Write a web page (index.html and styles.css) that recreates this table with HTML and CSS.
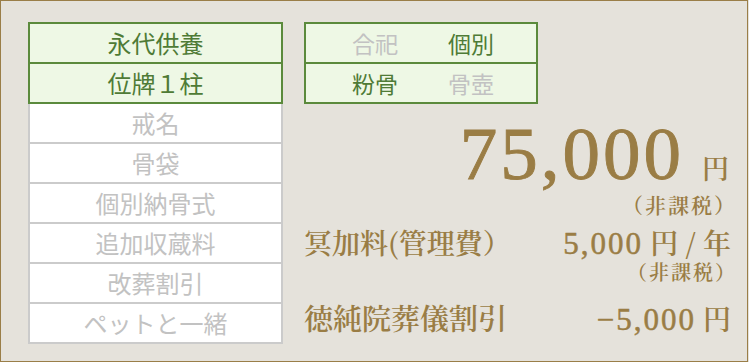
FILE: index.html
```html
<!DOCTYPE html>
<html lang="ja">
<head>
<meta charset="utf-8">
<title>プラン</title>
<link rel="stylesheet" href="styles.css">
</head>
<body>
<div class="frame">
  <div class="plans">
    <div class="group group-on">
      <div class="row">永代供養</div>
      <div class="row">位牌１柱</div>
    </div>
    <div class="group group-off">
      <div class="row">戒名</div>
      <div class="row">骨袋</div>
      <div class="row">個別納骨式</div>
      <div class="row">追加収蔵料</div>
      <div class="row">改葬割引</div>
      <div class="row">ペットと一緒</div>
    </div>
  </div>
  <div class="side">
    <div class="options">
      <div class="opt-row"><span class="opt off">合祀</span><span class="opt on">個別</span></div>
      <div class="opt-row"><span class="opt on">粉骨</span><span class="opt off">骨壺</span></div>
    </div>
    <div class="price">
      <span class="price-num">75,000</span><span class="price-yen">円</span>
    </div>
    <div class="tax tax-main">（非課税）</div>
    <div class="line line-fee">
      <span class="label">冥加料(管理費）</span>
      <span class="value"><span class="num">5,000</span> 円 / 年</span>
    </div>
    <div class="tax tax-fee">（非課税）</div>
    <div class="line line-disc">
      <span class="label">徳純院葬儀割引</span>
      <span class="value"><span class="num">−5,000</span> 円</span>
    </div>
  </div>
</div>
</body>
</html>
```
FILE: styles.css
```css
html, body {
  margin: 0;
  padding: 0;
  background: #e5e2db;
}
.frame {
  box-sizing: border-box;
  width: 748px;
  height: 362px;
  border: 1px solid #9a7e48;
  background: #e5e2db;
  display: flex;
  padding: 21px 20px 0 27px;
}
.plans {
  width: 255px;
  display: flex;
  flex-direction: column;
  font-family: "Noto Sans CJK JP", "Noto Sans", sans-serif;
  font-size: 24px;
}
.group {
  display: flex;
  flex-direction: column;
}
.row {
  height: 38px;
  display: flex;
  align-items: center;
  justify-content: center;
  line-height: 1;
}
.group-on {
  border: 2px solid #5b8a3c;
  background: #eef8e5;
  color: #4f7b36;
}
.group-on .row + .row {
  border-top: 2px solid #5b8a3c;
}
.group-off {
  border: 2px solid #cbcbcb;
  border-top: 0;
  background: #ffffff;
  color: #c2c2c2;
}
.group-off .row + .row {
  border-top: 2px solid #cbcbcb;
}
.side {
  flex: 1;
  margin-left: 21px;
  display: flex;
  flex-direction: column;
  color: #9a7d45;
  font-family: "Noto Serif CJK JP", "Noto Sans CJK JP", serif;
}
.options {
  width: 230px;
  border: 2px solid #5b8a3c;
  background: #eef8e5;
  font-family: "Noto Sans CJK JP", "Noto Sans", sans-serif;
  font-size: 23px;
}
.opt-row {
  height: 38px;
  display: flex;
  align-items: center;
  justify-content: center;
  gap: 50px;
  line-height: 1;
  padding-left: 4px;
}
.opt-row + .opt-row {
  border-top: 2px solid #5b8a3c;
}
.opt.on { color: #4f7b36; }
.opt.off { color: #c2c2c2; }
.price {
  align-self: flex-end;
  display: flex;
  align-items: baseline;
  margin-top: 13px;
  margin-right: -2px;
  line-height: 74px;
  height: 74px;
}
.price-num {
  font-family: "Liberation Serif", serif;
  font-size: 75px;
  letter-spacing: 3px;
  -webkit-text-stroke: 0.9px #9a7d45;
}
.price-yen {
  font-size: 27px;
  margin-left: 18px;
  font-weight: 600;
}
.tax {
  align-self: flex-end;
  font-size: 21px;
  line-height: 22px;
  font-weight: 600;
  letter-spacing: 2px;
  margin-right: -10px;
}
.tax-main { margin-top: 2px; }
.line {
  display: flex;
  justify-content: space-between;
  align-items: baseline;
  font-weight: 600;
}
.line-fee { margin-top: 12px; }
.line-disc { margin-top: 20px; }
.label {
  font-size: 28px;
  line-height: 30px;
}
.line-disc .label { font-size: 29px; }
.value {
  font-size: 28px;
  line-height: 30px;
  margin-right: -4px;
}
.num {
  font-family: "Liberation Serif", serif;
  font-size: 31px;
  font-weight: normal;
  letter-spacing: 2px;
  -webkit-text-stroke: 0.5px #9a7d45;
}
.tax-fee { margin-top: 2px; font-size: 20px; }
```
